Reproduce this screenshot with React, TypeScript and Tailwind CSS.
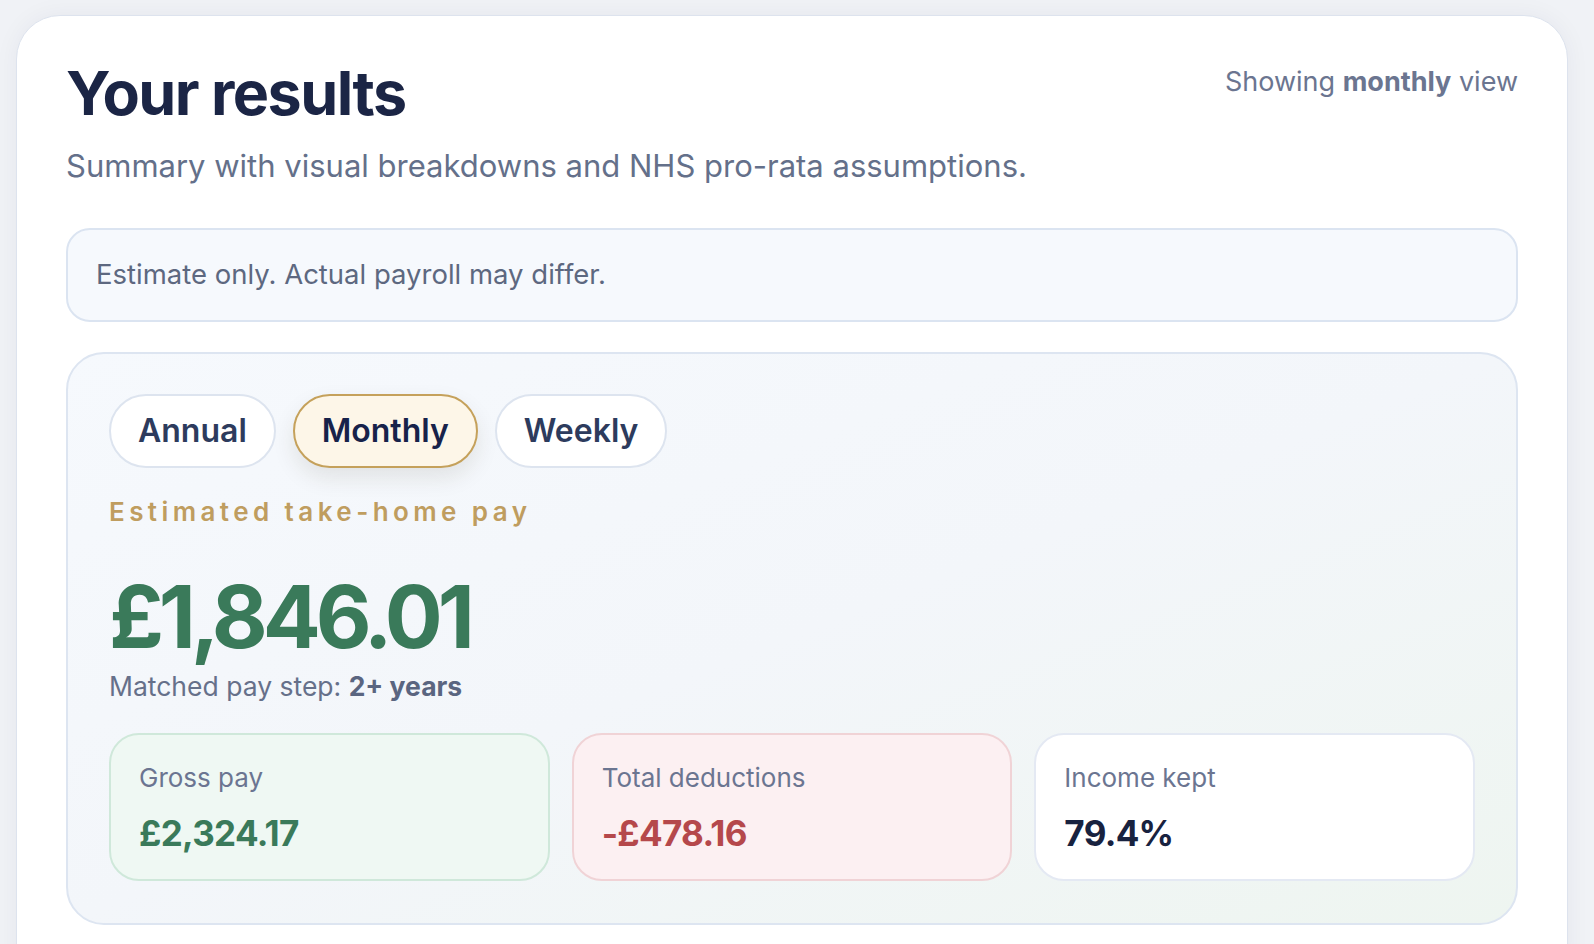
import React from "react";

const FONT = { fontFamily: "Inter, 'Liberation Sans', sans-serif" };

const PERIODS = ["Annual", "Monthly", "Weekly"];

function Stat({
  label,
  value,
  tone,
}: {
  label: string;
  value: string;
  tone: "green" | "red" | "plain";
}) {
  const box =
    tone === "green"
      ? "bg-[#eff8f3] border-[#cfe8da]"
      : tone === "red"
        ? "bg-[#fcf0f2] border-[#f0d3d6]"
        : "bg-white border-[#e4e9f3]";
  const ink =
    tone === "green" ? "text-[#3a7a5a]" : tone === "red" ? "text-[#b5484b]" : "text-[#18223f]";
  return (
    <div className={`flex h-[148px] flex-col rounded-[30px] border-2 px-[28px] pt-[27px] ${box}`}>
      <div className="text-[26px] leading-[32px] text-[#6b7591]">{label}</div>
      <div className={`mt-[19px] text-[35px] font-bold leading-[40px] tracking-[-0.02em] ${ink}`}>
        {value}
      </div>
    </div>
  );
}

export default function App() {
  const active = "Monthly";
  return (
    <div className="min-h-screen bg-[#f0f2f6] pl-[16px] pt-[15px]" style={FONT}>
      <div className="w-[1552px] rounded-t-[44px] border border-[#dde3ee] bg-white px-[49px] pb-[40px] pt-[45px] shadow-[0_0_24px_rgba(30,45,80,0.05)]">
        {/* header */}
        <div className="flex items-start justify-between">
          <h1 className="text-[61px] font-bold leading-[64px] tracking-[-0.025em] text-[#1b2545]">
            Your results
          </h1>
          <div className="pt-[3px] text-[27px] leading-[36px] text-[#6b7590]">
            Showing <span className="font-bold">monthly</span> view
          </div>
        </div>
        <p className="mt-[22px] text-[31px] leading-[38px] text-[#64708a]">
          Summary with visual breakdowns and NHS pro-rata assumptions.
        </p>

        {/* notice */}
        <div className="mt-[43px] flex h-[94px] items-center rounded-[24px] border-2 border-[#dbe4f1] bg-[#f6f9fd] px-[28px]">
          <span className="text-[27.5px] text-[#5d6880]">Estimate only. Actual payroll may differ.</span>
        </div>

        {/* results panel */}
        <div className="mt-[30px] rounded-[38px] border-2 border-[#dde5f1] bg-gradient-to-br from-[#f6f9fd] via-[#f3f6fa] to-[#eef5f0] px-[41px] pb-[42px] pt-[40px]">
          <div className="flex gap-[17px]">
            {PERIODS.map((p) => (
              <button
                key={p}
                type="button"
                className={`h-[74px] rounded-full border-2 px-[27px] text-[32px] font-semibold ${
                  p === active
                    ? "border-[#c5a15b] bg-[#fdf6e8] text-[#17224a] shadow-[0_10px_22px_rgba(60,50,20,0.10)]"
                    : "border-[#dde4ef] bg-white text-[#2d3b5d]"
                }`}
              >
                {p}
              </button>
            ))}
          </div>

          <div className="mt-[28px] text-[26px] font-semibold leading-[32px] tracking-[0.17em] text-[#bf9d5f]">
            Estimated take-home pay
          </div>

          <div className="mt-[44px] text-[86px] font-bold leading-[90px] tracking-[-0.06em] text-[#3a7a5a]">
            £1,846.01
          </div>
          <div className="mt-[7px] text-[26.5px] leading-[34px] text-[#66708a]">
            Matched pay step: <span className="font-bold text-[#5a6580]">2+ years</span>
          </div>

          <div className="mt-[30px] grid grid-cols-3 gap-[22px]">
            <Stat label="Gross pay" value="£2,324.17" tone="green" />
            <Stat label="Total deductions" value="-£478.16" tone="red" />
            <Stat label="Income kept" value="79.4%" tone="plain" />
          </div>
        </div>
      </div>
    </div>
  );
}
